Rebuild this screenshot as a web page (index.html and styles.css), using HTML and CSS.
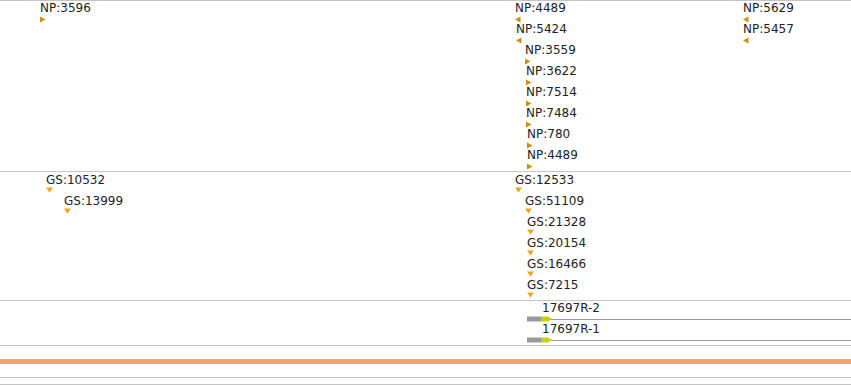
FILE: index.html
```html
<!DOCTYPE html>
<html>
<head>
<meta charset="utf-8">
<link rel="stylesheet" href="styles.css">
</head>
<body>
<div class="browser">
  <div class="track track-np">
    <div class="feat" style="left:40px;top:0px"><span class="label">NP:3596</span><svg class="tri side np" width="6" height="7"><polygon points="0,0.5 5.5,3.5 0,6.5"/></svg></div>
    <div class="feat" style="left:515px;top:0px"><span class="label">NP:4489</span><svg class="tri side np" width="6" height="7"><polygon points="5.5,0.5 0,3.5 5.5,6.5"/></svg></div>
    <div class="feat" style="left:516px;top:21px"><span class="label">NP:5424</span><svg class="tri side np" width="6" height="7"><polygon points="5.5,0.5 0,3.5 5.5,6.5"/></svg></div>
    <div class="feat" style="left:525px;top:42px"><span class="label">NP:3559</span><svg class="tri side np" width="6" height="7"><polygon points="0,0.5 5.5,3.5 0,6.5"/></svg></div>
    <div class="feat" style="left:526px;top:63px"><span class="label">NP:3622</span><svg class="tri side np" width="6" height="7"><polygon points="0,0.5 5.5,3.5 0,6.5"/></svg></div>
    <div class="feat" style="left:526px;top:84px"><span class="label">NP:7514</span><svg class="tri side np" width="6" height="7"><polygon points="0,0.5 5.5,3.5 0,6.5"/></svg></div>
    <div class="feat" style="left:526px;top:105px"><span class="label">NP:7484</span><svg class="tri side np" width="6" height="7"><polygon points="0,0.5 5.5,3.5 0,6.5"/></svg></div>
    <div class="feat" style="left:527px;top:126px"><span class="label">NP:780</span><svg class="tri side np" width="6" height="7"><polygon points="0,0.5 5.5,3.5 0,6.5"/></svg></div>
    <div class="feat" style="left:527px;top:147px"><span class="label">NP:4489</span><svg class="tri side np" width="6" height="7"><polygon points="0,0.5 5.5,3.5 0,6.5"/></svg></div>
    <div class="feat" style="left:743px;top:0px"><span class="label">NP:5629</span><svg class="tri side np" width="6" height="7"><polygon points="5.5,0.5 0,3.5 5.5,6.5"/></svg></div>
    <div class="feat" style="left:743px;top:21px"><span class="label">NP:5457</span><svg class="tri side np" width="6" height="7"><polygon points="5.5,0.5 0,3.5 5.5,6.5"/></svg></div>
  </div>
  <div class="track track-gs">
    <div class="feat" style="left:46px;top:1px"><span class="label">GS:10532</span><svg class="tri down gs" width="8" height="6"><polygon points="0,0.5 7,0.5 3.5,5.5"/></svg></div>
    <div class="feat" style="left:64px;top:22px"><span class="label">GS:13999</span><svg class="tri down gs" width="8" height="6"><polygon points="0,0.5 7,0.5 3.5,5.5"/></svg></div>
    <div class="feat" style="left:515px;top:1px"><span class="label">GS:12533</span><svg class="tri down gs" width="8" height="6"><polygon points="0,0.5 7,0.5 3.5,5.5"/></svg></div>
    <div class="feat" style="left:525px;top:22px"><span class="label">GS:51109</span><svg class="tri down gs" width="8" height="6"><polygon points="0,0.5 7,0.5 3.5,5.5"/></svg></div>
    <div class="feat" style="left:527px;top:43px"><span class="label">GS:21328</span><svg class="tri down gs" width="8" height="6"><polygon points="0,0.5 7,0.5 3.5,5.5"/></svg></div>
    <div class="feat" style="left:527px;top:64px"><span class="label">GS:20154</span><svg class="tri down gs" width="8" height="6"><polygon points="0,0.5 7,0.5 3.5,5.5"/></svg></div>
    <div class="feat" style="left:527px;top:85px"><span class="label">GS:16466</span><svg class="tri down gs" width="8" height="6"><polygon points="0,0.5 7,0.5 3.5,5.5"/></svg></div>
    <div class="feat" style="left:527px;top:106px"><span class="label">GS:7215</span><svg class="tri down gs" width="8" height="6"><polygon points="0,0.5 7,0.5 3.5,5.5"/></svg></div>
  </div>
  <div class="track track-gene">
    <div class="gene" style="left:527px;top:0px">
      <span class="label gene-label">17697R-2</span>
      <svg class="gene-glyph" width="324" height="6"><rect x="0" y="3" width="324" height="1" fill="#999"/><rect x="0" y="0.5" width="14" height="5" fill="#999"/><polygon points="14,0.5 21,0.5 25,3 21,5.5 14,5.5" fill="#c3d300"/></svg>
    </div>
    <div class="gene" style="left:527px;top:21px">
      <span class="label gene-label">17697R-1</span>
      <svg class="gene-glyph" width="324" height="6"><rect x="0" y="3" width="324" height="1" fill="#999"/><rect x="0" y="0.5" width="14" height="5" fill="#999"/><polygon points="14,0.5 21,0.5 25,3 21,5.5 14,5.5" fill="#c3d300"/></svg>
    </div>
  </div>
  <div class="track track-axis">
    <div class="range-bar"></div>
    <div class="rule"></div>
    <div class="rule last"></div>
  </div>
</div>
</body>
</html>
```
FILE: styles.css
```css
html, body {
  margin: 0;
  padding: 0;
  background: #fff;
}
body {
  width: 851px;
  height: 385px;
  overflow: hidden;
  font-family: "DejaVu Sans", Verdana, sans-serif;
  font-size: 12px;
  color: #222;
}
.browser {
  display: flex;
  flex-direction: column;
}
.track {
  position: relative;
  border-top: 1px solid #c4c4c4;
  box-sizing: border-box;
}
.track-np { height: 171px; }
.track-gs { height: 129px; }
.track-gene { height: 45px; }
.track-axis {
  padding-top: 13px;
  display: flex;
  flex-direction: column;
}
.feat, .gene {
  position: absolute;
  display: flex;
  flex-direction: column;
  align-items: flex-start;
}
.label {
  display: block;
  line-height: 14px;
  white-space: nowrap;
}
.tri { display: block; }
.tri.side { margin-top: 1px; }
.tri.np { fill: #d18f00; }
.tri.gs { fill: #f3a21c; }
.gene-label { margin-left: 15px; }
.gene-glyph { display: block; margin-top: 1px; }
.range-bar {
  height: 5px;
  background: #f4a470;
}
.rule {
  margin-top: 13px;
  height: 1px;
  background: #c4c4c4;
}
.rule.last { margin-top: 6px; }
```
